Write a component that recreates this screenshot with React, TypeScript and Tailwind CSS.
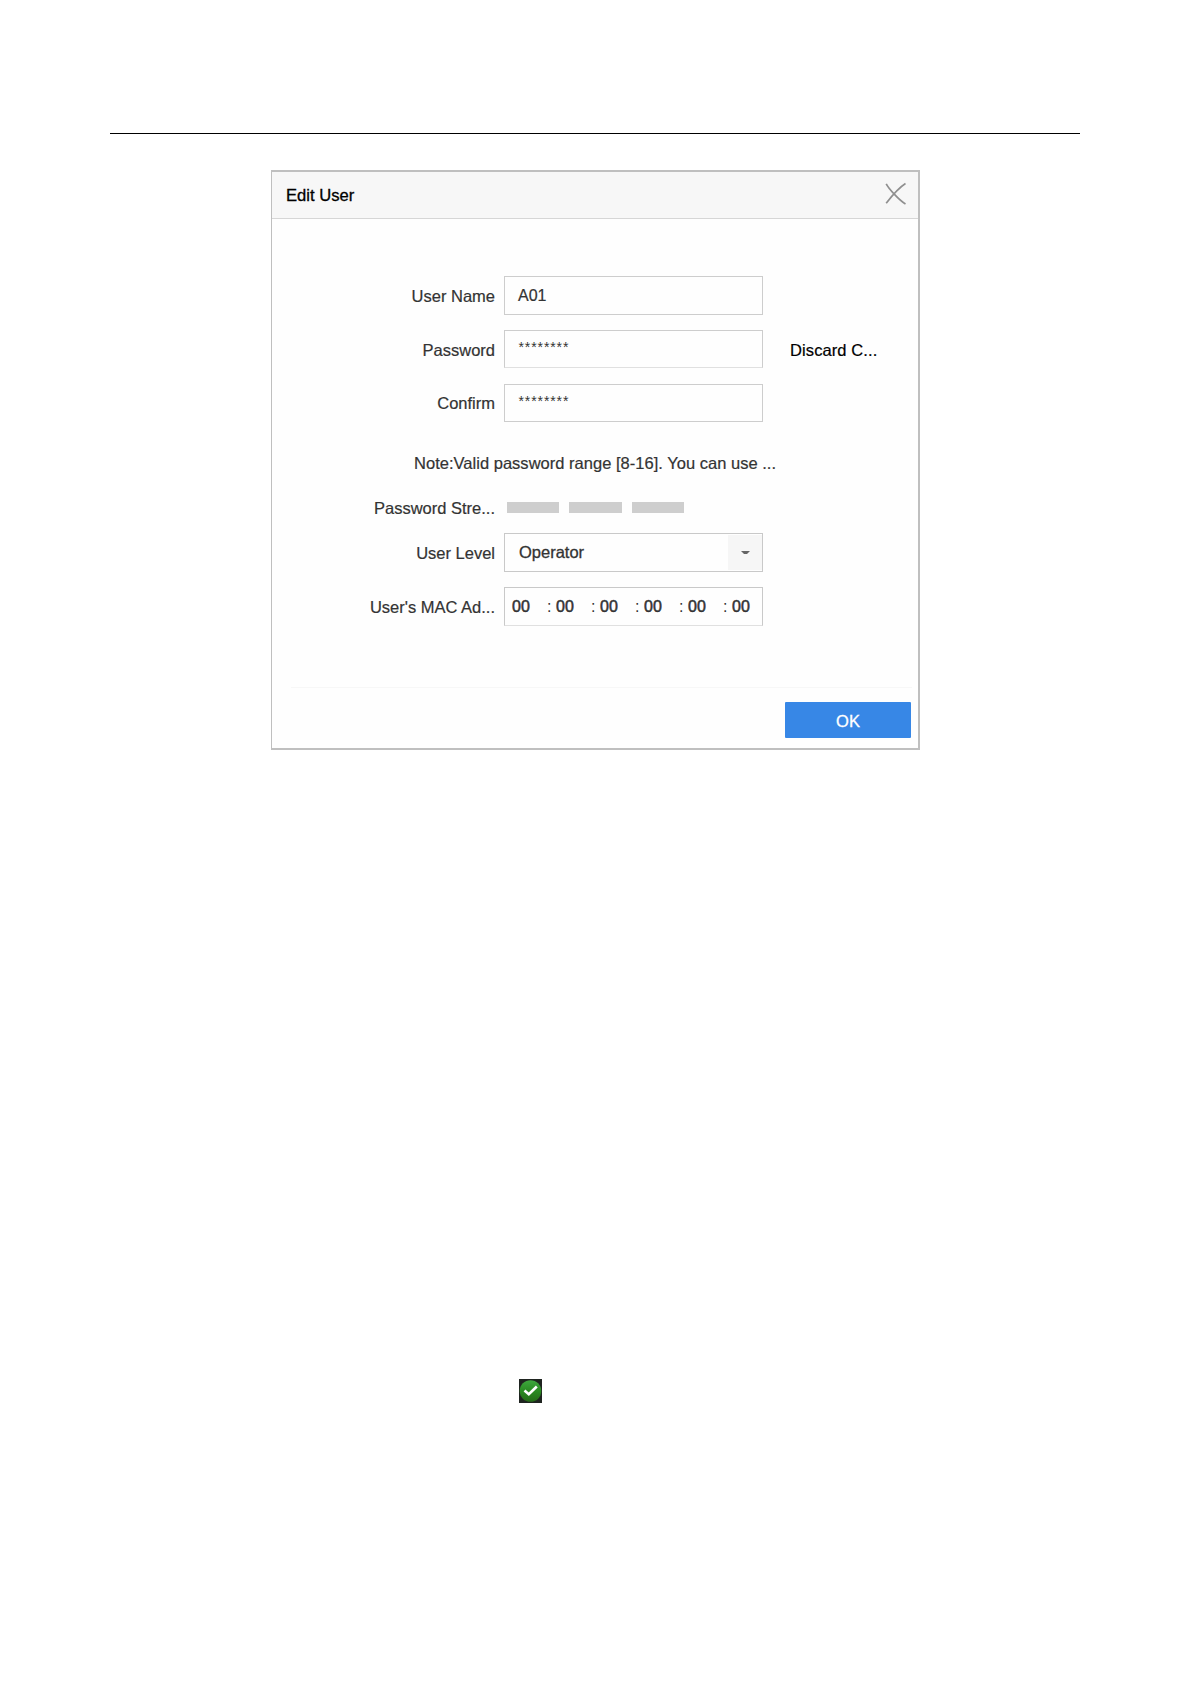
import type { ReactNode } from "react";

interface FormRowProps {
  label: string;
  className: string;
  labelClassName?: string;
  children: ReactNode;
}

function FormRow({ label, className, labelClassName = "pt-px", children }: FormRowProps) {
  return (
    <div className={`flex ${className}`}>
      <label
        className={`w-[223px] mr-[9px] shrink-0 text-right leading-[39px] whitespace-nowrap [-webkit-text-stroke:0.2px] ${labelClassName}`}
      >
        {label}
      </label>
      {children}
    </div>
  );
}

const macParts = ["00", "00", "00", "00", "00", "00"];

function CloseIcon() {
  return (
    <svg width="22" height="24" viewBox="0 0 22 24" fill="none" stroke="#8f8f8f" strokeWidth="1.7">
      <path d="M1.200 1.800C4 7 14 18 20.500 22M20.500 1.500C15 5 6 15 1.200 21.200" />
    </svg>
  );
}

function CheckBadge() {
  return (
    <svg width="23" height="24" viewBox="0 0 23 24">
      <defs>
        <linearGradient id="badge" x1="0" y1="0" x2="0" y2="1">
          <stop offset="0" stopColor="#3fa83f" />
          <stop offset="0.5" stopColor="#2a8a22" />
          <stop offset="1" stopColor="#256a17" />
        </linearGradient>
      </defs>
      <rect width="23" height="24" fill="#1f2420" />
      <circle cx="11.500" cy="12" r="10.800" fill="url(#badge)" />
      <path d="M5.500 11.500L9.800 15.300L17.800 7.500" fill="none" stroke="#fff" strokeWidth="2.600" />
    </svg>
  );
}

export default function App() {
  return (
    <main className="w-[1191px] h-[1684px] bg-white flex flex-col items-center pt-[133px] overflow-hidden font-['Liberation_Sans',Arial,sans-serif] text-[16.5px] text-[#333]">
      <div className="w-[970px] h-px bg-black shrink-0 mr-px" />

      <section className="mt-9 w-[649px] h-[580px] shrink-0 bg-[#fefefe] border-2 border-l border-[#bfbfbf]">
        <header className="h-[47px] flex justify-between bg-[#f7f7f7] border-b border-[#d6d6d6] pl-[14px] pr-[11px]">
          <h1 className="text-[16.6px] leading-[46px] pt-px text-black [-webkit-text-stroke:0.3px]">Edit User</h1>
          <button className="h-6 mt-[10px]" aria-label="Close">
            <CloseIcon />
          </button>
        </header>

        <FormRow label="User Name" className="mt-[57px] h-[39px]">
          <div className="w-[259px] h-[39px] border border-[#cdcdcd] pl-[13px] leading-[38px] text-[16px] [-webkit-text-stroke:0.2px]">
            A01
          </div>
        </FormRow>

        <FormRow label="Password" className="mt-[15px] h-[38px]">
          <div className="w-[259px] h-[38px] border border-[#cdcdcd] border-b-[#e0e0e0] pl-[13.5px] leading-[32px] text-[14px] tracking-[0.9px]">
            ********
          </div>
          <a className="ml-[27px] leading-[39px] pt-px text-black whitespace-nowrap tracking-[0.1px] [-webkit-text-stroke:0.2px]">
            Discard C...
          </a>
        </FormRow>

        <FormRow label="Confirm" className="mt-4 h-[38px]" labelClassName="pt-0">
          <div className="w-[259px] h-[38px] border border-[#cdcdcd] pl-[13.5px] leading-[32px] text-[14px] tracking-[0.9px]">
            ********
          </div>
        </FormRow>

        <p className="mt-[31px] ml-[142px] h-5 leading-5 whitespace-nowrap tracking-[0.02px] [-webkit-text-stroke:0.2px]">
          Note:Valid password range [8-16]. You can use ...
        </p>

        <FormRow label="Password Stre..." className="mt-[15px] h-[39px]">
          <div className="flex gap-[10px] pl-[3px] pt-[14px]">
            <span className="w-[52px] h-[11px] bg-[#cecece]" />
            <span className="w-[53px] h-[11px] bg-[#cecece]" />
            <span className="w-[52px] h-[11px] bg-[#cecece]" />
          </div>
        </FormRow>

        <FormRow label="User Level" className="mt-[6px] h-[39px]">
          <div className="w-[259px] h-[39px] border border-[#c9c9c9] pl-[14px] flex justify-between">
            <span className="leading-[37px] [-webkit-text-stroke:0.3px]">Operator</span>
            <span className="w-[34px] h-[35px] mt-px bg-[#f6f6f6] flex items-center justify-center pl-px">
              <svg width="9" height="3" viewBox="0 0 9 3">
                <path d="M0 0H9L6 3H3Z" fill="#666" />
              </svg>
            </span>
          </div>
        </FormRow>

        <FormRow label="User's MAC Ad..." className="mt-[15px] h-[39px]">
          <div className="w-[259px] h-[39px] border border-[#c9c9c9] border-b-[#e0e0e0] pl-[7px] flex leading-[37px] text-[16px]">
            {macParts.map((part, i) => (
              <span key={i} className="w-[44px] shrink-0 flex">
                <span className="w-[35px] [-webkit-text-stroke:0.5px]">{part}</span>
                {i < macParts.length - 1 && <span>:</span>}
              </span>
            ))}
          </div>
        </FormRow>

        <footer className="mt-[61px] ml-[19px] mr-[6px] border-t border-[#f7f7f7] pt-[14px] pr-px flex justify-end">
          <button className="w-[126px] h-9 rounded-[1px] bg-[#3787e6] text-white text-[16.5px] leading-9 pt-px [-webkit-text-stroke:0.3px]">
            OK
          </button>
        </footer>
      </section>

      <div className="mt-[629px] w-[970px] pl-[409px] shrink-0 mr-px">
        <CheckBadge />
      </div>
    </main>
  );
}
